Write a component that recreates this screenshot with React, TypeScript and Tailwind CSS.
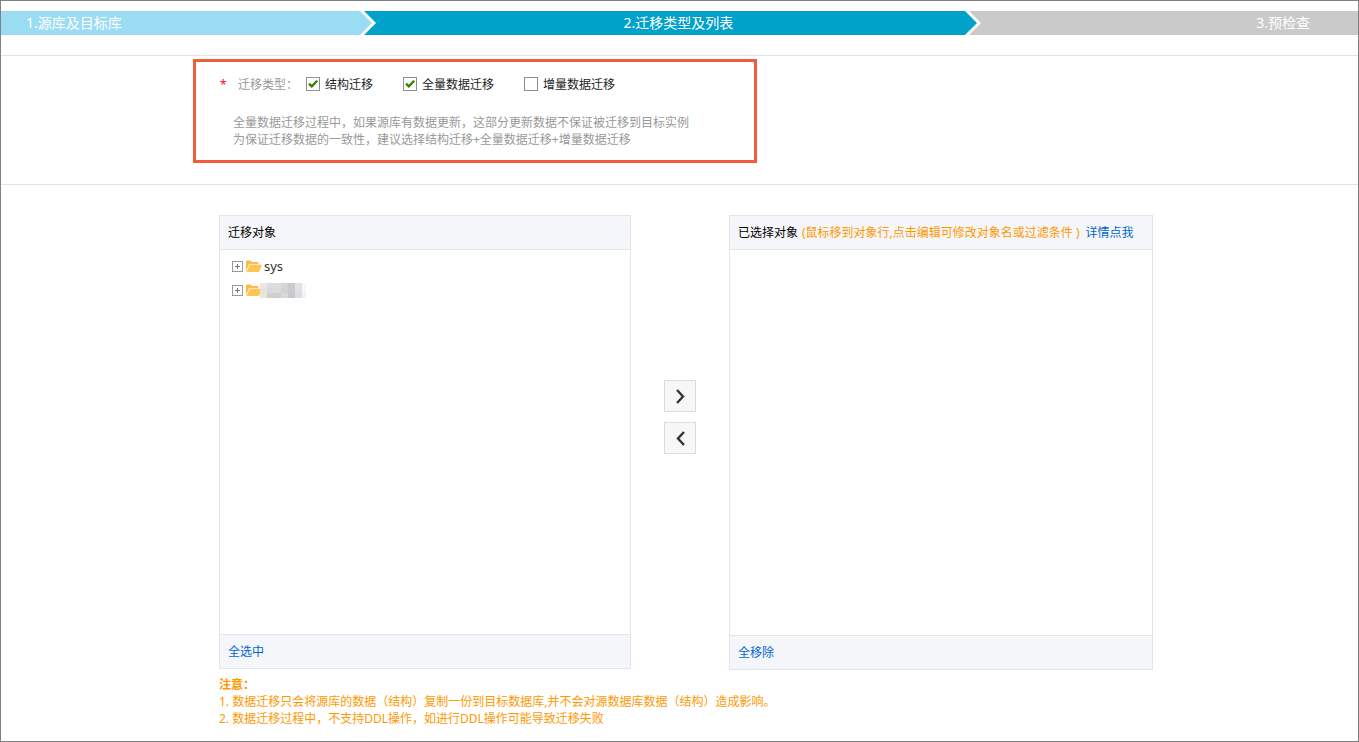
import { useState, type ReactNode } from "react";

function StepArrow({ from, to }: { from: string; to: string }) {
  return (
    <svg viewBox="0 0 16 24" preserveAspectRatio="none" className="h-6 w-4" aria-hidden="true">
      <rect width="16" height="24" fill={to} />
      <path d="M0 0H4L16 12L4 24H0Z" fill="#fff" />
      <path d="M0 0L12 12L0 24Z" fill={from} />
    </svg>
  );
}

function CheckOption({ label, initial }: { label: string; initial: boolean }) {
  const [checked, setChecked] = useState(initial);
  return (
    <label className="flex items-center gap-[5px] text-[#222]">
      <span className="grid">
        <input
          type="checkbox"
          checked={checked}
          onChange={(e) => setChecked(e.target.checked)}
          className="col-start-1 row-start-1 size-3.5 appearance-none border border-[#8e8f8f] bg-white"
        />
        {checked && (
          <svg viewBox="0 0 14 14" className="pointer-events-none col-start-1 row-start-1 size-3.5" aria-hidden="true">
            <path d="M3 6.6L5.8 9.4L11.2 3.8" fill="none" stroke="#2c8400" strokeWidth="2.3" />
          </svg>
        )}
      </span>
      {label}
    </label>
  );
}

function TreeRow({ children }: { children: ReactNode }) {
  return (
    <li className="flex h-6 items-center">
      <button type="button" aria-label="展开" className="mr-[3px]">
        <svg viewBox="0 0 11 11" className="size-[11px]" aria-hidden="true">
          <rect x="0.5" y="0.5" width="10" height="10" fill="#fff" stroke="#999" />
          <path d="M3 5.5H8M5.5 3V8" stroke="#777" />
        </svg>
      </button>
      <svg viewBox="0 0 16 12" className="h-3 w-4 shrink-0" aria-hidden="true">
        <path d="M0 11V1.5Q0 .5 1 .5H4.5L6 2H11.5Q12.5 2 12.5 3V4H4.2Q3.3 4 2.9 4.8Z" fill="#fdb94a" />
        <path d="M.3 12L3.3 5.4Q3.6 4.7 4.4 4.7H16L13.4 11.2Q13 12 12.2 12Z" fill="#ffc552" />
        <path d="M.4 11.8L3.3 5.3Q3.6 4.4 4.4 4.4H13" fill="none" stroke="#ffe2a8" strokeWidth=".7" />
      </svg>
      {children}
    </li>
  );
}

const mosaic = [
  ["#e9e7e1", "#dcdde0", "#dedee0", "#d8d5d6", "#cbc9ca", "#dfe3e8", "#f6f8fc"],
  ["#e5e3dd", "#dadadb", "#dddadb", "#d3d1d2", "#cccacb", "#dde1e5", "#f5f7fa"],
  ["#eae4da", "#d2cfd0", "#d0cdce", "#dad8d9", "#c9c7c8", "#dadde2", "#f0f1f5"],
];

function MosaicName() {
  return (
    <svg viewBox="0 0 46 15" className="-ml-0.5 h-[15px] w-[46px]" aria-hidden="true">
      {mosaic.map((row, y) =>
        row.map((c, x) => (
          <rect key={`${x}-${y}`} x={x * 7} y={y * 5} width={x === 6 ? 4 : 7} height="5" fill={c} />
        )),
      )}
    </svg>
  );
}

function MoveButton({ label, d }: { label: string; d: string }) {
  return (
    <button type="button" aria-label={label} className="grid size-8 place-items-center border border-[#ddd] bg-[#f7f7f7]">
      <svg viewBox="0 0 16 16" className="size-4" aria-hidden="true">
        <path d={d} fill="none" stroke="#333" strokeWidth="2.4" />
      </svg>
    </button>
  );
}

export default function App() {
  return (
    <main className="min-h-screen border border-[#808080] bg-white pt-2.5 pb-3.5 font-['Noto_Sans','Noto_Sans_CJK_SC',sans-serif] text-xs leading-[17px] text-black">
      <nav className="grid h-6 grid-cols-[359fr_16px_589fr_16px_377fr] text-sm leading-6 text-white">
        <div className="bg-[#9bdcf5] pl-[25px]">1.源库及目标库</div>
        <StepArrow from="#9bdcf5" to="#00a2ca" />
        <div className="bg-[#00a2ca] pl-4 text-center">2.迁移类型及列表</div>
        <StepArrow from="#00a2ca" to="#cacaca" />
        <div className="bg-[#cacaca] pr-12 text-right">3.预检查</div>
      </nav>

      <section className="mt-5 border-y border-[#e1e4e6] pt-[3px] pb-[21px] pl-48">
        <div className="w-[564px] border-3 border-[#f25c3b] pt-[13px] pb-3 pl-[23px]">
          <fieldset className="flex h-[18px] items-center">
            <span className="w-[19px] pl-px text-[#ff0033]">*</span>
            <span className="w-[68px] text-[#999]">迁移类型：</span>
            <div className="flex gap-[30px]">
              <CheckOption label="结构迁移" initial={true} />
              <CheckOption label="全量数据迁移" initial={true} />
              <CheckOption label="增量数据迁移" initial={false} />
            </div>
          </fieldset>
          <p className="mt-[21px] pl-3.5 text-[#999]">
            全量数据迁移过程中，如果源库有数据更新，这部分更新数据不保证被迁移到目标实例
            <br />
            为保证迁移数据的一致性，建议选择结构迁移+全量数据迁移+增量数据迁移
          </p>
        </div>
      </section>

      <div className="mt-[30px] mr-[205px] ml-[218px] grid grid-cols-[412fr_98px_424fr] items-start">
        <section className="border border-[#e1e6eb]">
          <h2 className="flex h-[34px] items-center border-b border-[#e1e6eb] bg-[#f5f6fa] px-2">迁移对象</h2>
          <ul className="h-96 px-3 pt-1">
            <TreeRow>
              <span className="ml-0.5 text-[13px] text-[#333]">sys</span>
            </TreeRow>
            <TreeRow>
              <MosaicName />
            </TreeRow>
          </ul>
          <div className="flex h-[34px] items-center border-t border-[#e1e6eb] bg-[#f5f6fa] px-2">
            <a href="#all" className="text-[#06c]">全选中</a>
          </div>
        </section>

        <div className="flex flex-col items-center gap-2.5 self-center pb-[52px]">
          <MoveButton label="添加" d="M5 2L11 8.5L5 15" />
          <MoveButton label="移除" d="M12 2L6 8.5L12 15" />
        </div>

        <section className="border border-[#e1e6eb]">
          <h2 className="flex h-[34px] items-center border-b border-[#e1e6eb] bg-[#f5f6fa] px-2 whitespace-nowrap">
            已选择对象
            <span className="ml-1 text-[#ff9900]">(鼠标移到对象行,点击编辑可修改对象名或过滤条件 )</span>
            <a href="#detail" className="ml-1.5 text-[#06c]">详情点我</a>
          </h2>
          <div className="h-[385px]" />
          <div className="flex h-[34px] items-center border-t border-[#e1e6eb] bg-[#f5f6fa] px-2">
            <a href="#none" className="text-[#06c]">全移除</a>
          </div>
        </section>
      </div>

      <div className="mt-1.5 ml-[218px] text-[#ff9900]">
        <p className="font-bold">注意：</p>
        <p>1. 数据迁移只会将源库的数据（结构）复制一份到目标数据库,并不会对源数据库数据（结构）造成影响。</p>
        <p>2. 数据迁移过程中，不支持DDL操作，如进行DDL操作可能导致迁移失败</p>
      </div>
    </main>
  );
}
